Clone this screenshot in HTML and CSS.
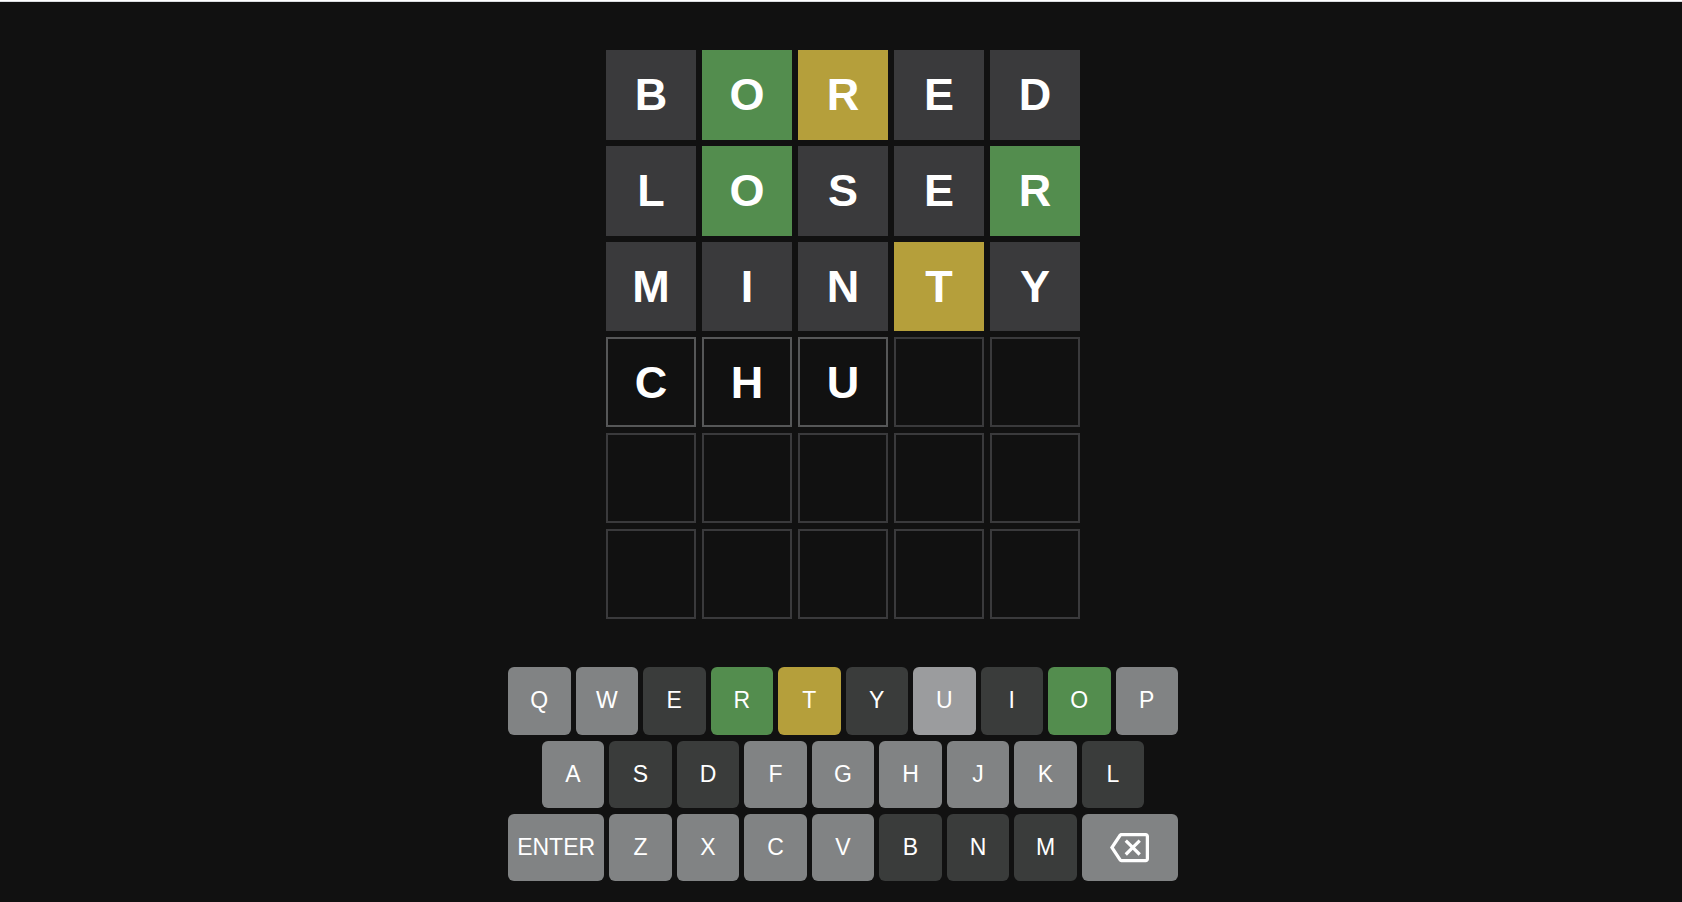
FILE: index.html
```html
<!DOCTYPE html>
<html lang="en">
<head>
<meta charset="utf-8">
<meta name="viewport" content="width=device-width, initial-scale=1">
<title>Word game</title>
<link rel="stylesheet" href="styles.css">
</head>
<body>
<main class="game">
  <div class="board" role="group" aria-label="Guesses">
    <div class="tile absent">B</div>
    <div class="tile correct">O</div>
    <div class="tile present">R</div>
    <div class="tile absent">E</div>
    <div class="tile absent">D</div>

    <div class="tile absent">L</div>
    <div class="tile correct">O</div>
    <div class="tile absent">S</div>
    <div class="tile absent">E</div>
    <div class="tile correct">R</div>

    <div class="tile absent">M</div>
    <div class="tile absent">I</div>
    <div class="tile absent">N</div>
    <div class="tile present">T</div>
    <div class="tile absent">Y</div>

    <div class="tile typed">C</div>
    <div class="tile typed">H</div>
    <div class="tile typed">U</div>
    <div class="tile"></div>
    <div class="tile"></div>

    <div class="tile"></div>
    <div class="tile"></div>
    <div class="tile"></div>
    <div class="tile"></div>
    <div class="tile"></div>

    <div class="tile"></div>
    <div class="tile"></div>
    <div class="tile"></div>
    <div class="tile"></div>
    <div class="tile"></div>
  </div>

  <div class="keyboard" role="group" aria-label="Keyboard">
    <button class="key" type="button">Q</button>
    <button class="key" type="button">W</button>
    <button class="key key-absent" type="button">E</button>
    <button class="key correct" type="button">R</button>
    <button class="key present" type="button">T</button>
    <button class="key key-absent" type="button">Y</button>
    <button class="key key-active" type="button">U</button>
    <button class="key key-absent" type="button">I</button>
    <button class="key correct" type="button">O</button>
    <button class="key" type="button">P</button>

    <button class="key key-indent" type="button">A</button>
    <button class="key key-absent" type="button">S</button>
    <button class="key key-absent" type="button">D</button>
    <button class="key" type="button">F</button>
    <button class="key" type="button">G</button>
    <button class="key" type="button">H</button>
    <button class="key" type="button">J</button>
    <button class="key" type="button">K</button>
    <button class="key key-absent" type="button">L</button>

    <button class="key key-wide" type="button">ENTER</button>
    <button class="key" type="button">Z</button>
    <button class="key" type="button">X</button>
    <button class="key" type="button">C</button>
    <button class="key" type="button">V</button>
    <button class="key key-absent" type="button">B</button>
    <button class="key key-absent" type="button">N</button>
    <button class="key key-absent" type="button">M</button>
    <button class="key key-wide" type="button" aria-label="Backspace">
      <svg class="key-icon" viewBox="0 0 24 24" aria-hidden="true"><path fill="currentColor" d="M22 3H7c-.69 0-1.23.35-1.59.88L0 12l5.41 8.11c.36.53.9.89 1.59.89h15c1.1 0 2-.9 2-2V5c0-1.1-.9-2-2-2zm0 16H7.07L2.4 12l4.66-7H22v14zm-11.59-2L14 13.41 17.59 17 19 15.59 15.41 12 19 8.41 17.59 7 14 10.59 10.41 7 9 8.41 12.59 12 9 15.59z"/></svg>
    </button>
  </div>
</main>
</body>
</html>
```

FILE: styles.css
```css
* {
  box-sizing: border-box;
}

body {
  margin: 0;
  background: #111111;
  color: #ffffff;
  font-family: "Liberation Sans", Arial, sans-serif;
  border-top: 1px solid #ffffff;
}

.game {
  display: flex;
  flex-direction: column;
  align-items: center;
  gap: 48px;
  min-height: calc(100vh - 1px);
  padding: 48px 0 20px 4px;
  border-top: 1px solid #dadce0;
}

.board {
  display: grid;
  grid-template-columns: repeat(5, 1fr);
  grid-template-rows: repeat(6, 1fr);
  gap: 6px;
  width: 100%;
  max-width: 474px;
  aspect-ratio: 5 / 6;
}

.tile {
  display: flex;
  align-items: center;
  justify-content: center;
  border: 2px solid #3a3a3c;
  font-size: 45px;
  font-weight: bold;
  line-height: 1;
}

.typed {
  border-color: #565758;
}

.absent {
  background: #3a3a3c;
}

.keyboard {
  display: grid;
  grid-template-columns: repeat(20, minmax(0, 1fr));
  grid-template-rows: 68px 67px 67px;
  gap: 6px 5px;
  width: 100%;
  max-width: 670px;
}

.key {
  grid-column: span 2;
  display: flex;
  align-items: center;
  justify-content: center;
  padding: 0;
  border: 0;
  border-radius: 6px;
  background: #818384;
  color: #ffffff;
  font-family: inherit;
  font-size: 23px;
  cursor: pointer;
}

.key-indent {
  grid-column: 2 / span 2;
}

.key-wide {
  grid-column: span 3;
}

.key-absent {
  background: #3a3c3b;
}

.key-active {
  background: #9b9c9e;
}

.correct {
  background: #538d4e;
  border-color: #538d4e;
}

.present {
  background: #b59f3b;
  border-color: #b59f3b;
}

.key-icon {
  width: 39px;
  height: 39px;
}
```
